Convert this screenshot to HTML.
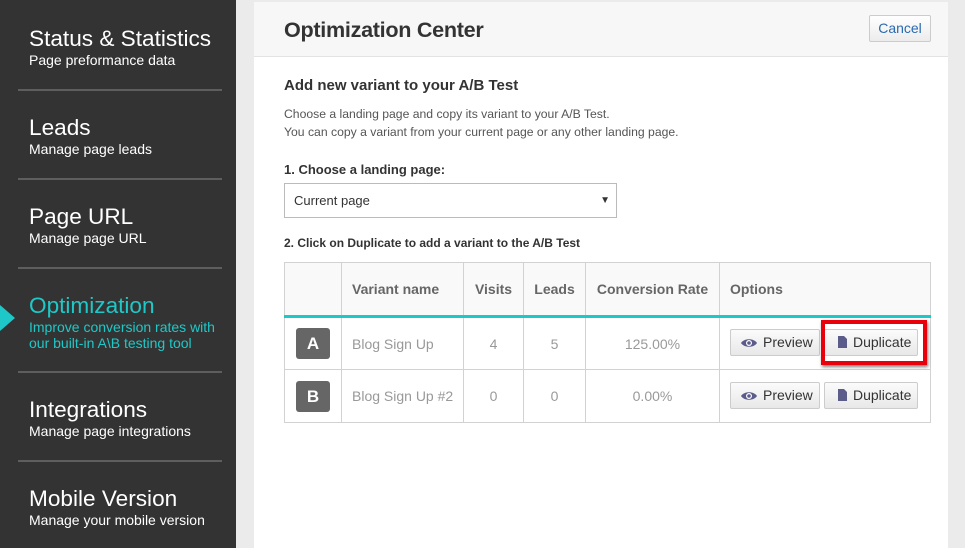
<!DOCTYPE html>
<html><head><style>
*{margin:0;padding:0;box-sizing:border-box}
body{width:965px;height:548px;background:#ebebeb;font-family:"Liberation Sans",Arial,sans-serif;position:relative;overflow:hidden}
.sb{position:absolute;left:0;top:0;width:236px;height:548px;background:#333}
.it{position:absolute;left:29px;color:#fff}
.it .t{font-size:22.6px;line-height:26px}
.it .s{font-size:14px;line-height:16px}
.sep{position:absolute;left:18px;width:204px;height:2px;background:#5e5e5e}
.act{color:#1fc8c8}
.panel{position:absolute;left:254px;top:2px;width:694px;height:546px;background:#fff}
.hd{height:55px;background:#f7f7f7;border-bottom:1px solid #e3e3e3;position:relative}
.hd h1{position:absolute;left:30px;top:15px;font-size:21.6px;color:#333;font-weight:bold;letter-spacing:-.3px}
.cancel{position:absolute;left:615px;top:13px;width:62px;height:27px;border:1px solid #ccc;border-radius:2px;background:linear-gradient(#fff,#ececec);color:#2a6ab0;font-size:14px;text-align:center;line-height:25px}
.abs{position:absolute}
table{position:absolute;left:30px;top:260px;border-collapse:collapse;width:647px;font-size:14px}
td,th{border:1px solid #d2d2d2;text-align:center;color:#999}
th{height:54px;background:#f9f9f9;color:#666;font-weight:bold;border-bottom:3px solid #1fc8c8}
td{height:53px}
.bd{display:inline-block;width:34px;height:31px;background:#666;color:#fff;border-radius:3px;font-size:17px;line-height:31px;font-weight:bold}
.btn{position:absolute;height:27px;border:1px solid #ccc;border-radius:2px;background:linear-gradient(#fbfbfb,#e8e8e8);color:#333;font-size:14px;line-height:25px}
</style></head><body>
<div class="sb">
<div class="it" style="top:26px"><div class="t">Status &amp; Statistics</div><div class="s">Page preformance data</div></div>
<div class="sep" style="top:89px"></div>
<div class="it" style="top:115px"><div class="t">Leads</div><div class="s">Manage page leads</div></div>
<div class="sep" style="top:178px"></div>
<div class="it" style="top:204px"><div class="t">Page URL</div><div class="s">Manage page URL</div></div>
<div class="sep" style="top:267px"></div>
<div class="it act" style="top:293px"><div class="t">Optimization</div><div class="s">Improve conversion rates with<br>our built-in A\B testing tool</div></div>
<div class="abs" style="left:0;top:305px;width:0;height:0;border-top:13px solid transparent;border-bottom:13px solid transparent;border-left:15px solid #1fc8c8"></div>
<div class="sep" style="top:371px"></div>
<div class="it" style="top:397px"><div class="t">Integrations</div><div class="s">Manage page integrations</div></div>
<div class="sep" style="top:460px"></div>
<div class="it" style="top:486px"><div class="t">Mobile Version</div><div class="s">Manage your mobile version</div></div>
</div>
<div class="panel">
<div class="hd"><h1>Optimization Center</h1><div class="cancel">Cancel</div></div>
<div class="abs" style="left:30px;top:75px;font-size:15px;font-weight:bold;color:#333">Add new variant to your A/B Test</div>
<div class="abs" style="left:30px;top:103px;font-size:12.2px;line-height:18px;color:#555">Choose a landing page and copy its variant to your A/B Test.<br>You can copy a variant from your current page or any other landing page.</div>
<div class="abs" style="left:30px;top:160px;font-size:13px;font-weight:bold;color:#333">1. Choose a landing page:</div>
<div class="abs" style="left:30px;top:181px;width:333px;height:35px;border:1px solid #bbb;font-size:13px;line-height:33px;padding-left:9px;color:#333">Current page<span style="position:absolute;right:6px;font-size:10px">▼</span></div>
<div class="abs" style="left:30px;top:234px;font-size:12px;font-weight:bold;color:#333">2. Click on Duplicate to add a variant to the A/B Test</div>
<table>
<tr><th style="width:57px"></th><th style="width:122px;text-align:left;padding-left:10px">Variant name</th><th style="width:60px">Visits</th><th style="width:62px">Leads</th><th style="width:134px">Conversion Rate</th><th style="text-align:left;padding-left:10px">Options</th></tr>
<tr><td><span class="bd">A</span></td><td style="text-align:left;padding-left:10px">Blog Sign Up</td><td>4</td><td>5</td><td>125.00%</td><td></td></tr>
<tr><td><span class="bd">B</span></td><td style="text-align:left;padding-left:10px">Blog Sign Up #2</td><td>0</td><td>0</td><td>0.00%</td><td></td></tr>
</table>
<div class="btn" style="left:476px;top:327px;width:90px;padding-left:32px"><svg style="position:absolute;left:10px;top:8px" width="16" height="10" viewBox="0 0 16 10"><path d="M0 5C3 0 13 0 16 5C13 10 3 10 0 5Z" fill="#5c5c8a"/><circle cx="8" cy="5" r="3" fill="#fff"/><circle cx="8" cy="5" r="1.8" fill="#5c5c8a"/></svg>Preview</div>
<div class="btn" style="left:570px;top:327px;width:94px;padding-left:28px"><svg style="position:absolute;left:13px;top:6px" width="9" height="12" viewBox="0 0 9 12"><path d="M0 0H6L9 3V12H0Z" fill="#5c5c8a"/></svg>Duplicate</div>
<div class="abs" style="left:567px;top:318px;width:106px;height:45px;border:4px solid #e8000a;box-shadow:1px 2px 3px rgba(0,0,0,.5)"></div>
<div class="btn" style="left:476px;top:380px;width:90px;padding-left:32px"><svg style="position:absolute;left:10px;top:8px" width="16" height="10" viewBox="0 0 16 10"><path d="M0 5C3 0 13 0 16 5C13 10 3 10 0 5Z" fill="#5c5c8a"/><circle cx="8" cy="5" r="3" fill="#fff"/><circle cx="8" cy="5" r="1.8" fill="#5c5c8a"/></svg>Preview</div>
<div class="btn" style="left:570px;top:380px;width:94px;padding-left:28px"><svg style="position:absolute;left:13px;top:6px" width="9" height="12" viewBox="0 0 9 12"><path d="M0 0H6L9 3V12H0Z" fill="#5c5c8a"/></svg>Duplicate</div>
</div>
</body></html>
